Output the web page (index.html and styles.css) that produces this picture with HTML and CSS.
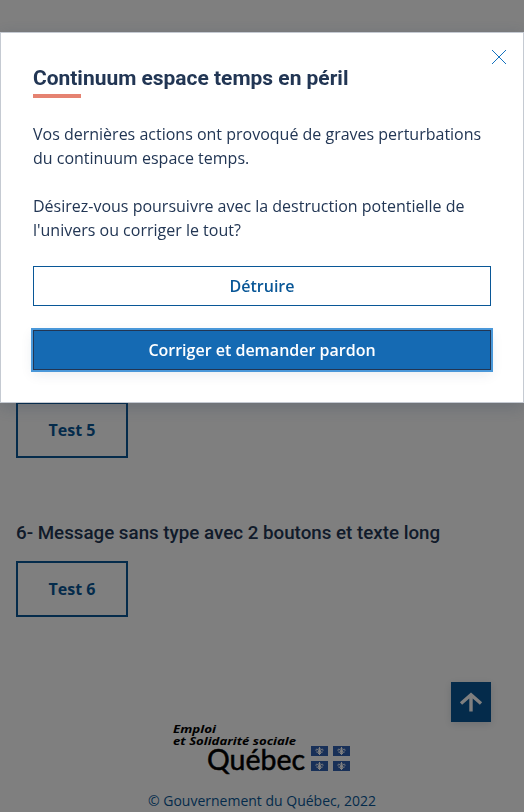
FILE: index.html
```html
<!DOCTYPE html>
<html lang="fr">
<head>
<meta charset="utf-8">
<title>Messages</title>
<link rel="stylesheet" href="styles.css">
</head>
<body>
<main class="page">
  <section class="test"><button class="test-button">Test 5</button></section>
  <section class="test">
    <h2 class="test-title">6- Message sans type avec 2 boutons et texte long</h2>
    <button class="test-button">Test 6</button>
  </section>
  <footer class="footer">
    <svg class="logo" width="180" height="56" viewBox="172 721 180 56" role="img" aria-label="Emploi et Solidarité sociale Québec">
      <defs>
        <g id="flag">
          <path fill="#3060b0" d="M0 0h17v10H0z"/>
          <path fill="none" stroke="#fff" stroke-width="1" d="M8.500 1v8M5.500 6.200h6M7.600 6C7.800 4 6.500 3 5.400 3.300 4.400 3.700 4.800 5 5.500 4.900M9.400 6C9.200 4 10.500 3 11.600 3.300 12.600 3.700 12.200 5 11.500 4.900M7 8l1.500-1.500L10 8"/>
          <path fill="#fff" d="M8.500.8l1.100 2-.6 3H8l-.6-3z"/>
        </g>
      </defs>
      <text class="ministry" x="173" y="732.500" textLength="43" lengthAdjust="spacingAndGlyphs">Emploi</text>
      <text class="ministry" x="173" y="744.500" textLength="123" lengthAdjust="spacingAndGlyphs">et Solidarité sociale</text>
      <text class="quebec" x="207" y="770" textLength="98" lengthAdjust="spacingAndGlyphs">Québec</text>
      <use href="#flag" x="311" y="746"/><use href="#flag" x="333" y="746"/>
      <use href="#flag" x="311" y="761"/><use href="#flag" x="333" y="761"/>
    </svg>
    <p class="copyright">© Gouvernement du Québec, 2022</p>
  </footer>
</main>
<button class="to-top" aria-label="Retour en haut">
  <svg width="24" height="22" viewBox="0 0 24 22"><path d="M12 20.500V3M2 12.500l10-8.700 10 8.700" fill="none" stroke="#fff" stroke-width="3.400"/></svg>
</button>
<div class="backdrop">
  <div class="modal" role="dialog" aria-modal="true" aria-labelledby="modal-title">
    <button class="close" aria-label="Fermer">
      <svg width="14" height="14" viewBox="0 0 14 14"><path d="M0 0l14 14M14 0L0 14" fill="none" stroke="#1472bf" stroke-width="1"/></svg>
    </button>
    <h1 class="modal-title" id="modal-title">Continuum espace temps en péril</h1>
    <div class="modal-body">
      <p>Vos dernières actions ont provoqué de graves perturbations du continuum espace temps.</p>
      <p>Désirez-vous poursuivre avec la destruction potentielle de l'univers ou corriger le tout?</p>
    </div>
    <div class="actions">
      <button class="action secondary">Détruire</button>
      <button class="action primary">Corriger et demander pardon</button>
    </div>
  </div>
</div>
</body>
</html>
```
FILE: styles.css
```css
* { box-sizing: border-box; }
html, body { height: 100%; }
body {
  margin: 0;
  overflow: hidden;
  background: #fff;
  color: #223654;
  font: 16px/24px "Open Sans", sans-serif;
}
button { font-family: inherit; margin: 0; }
p, h1, h2 { margin: 0; }
.page { padding: 402px 16px 0; }
.test { margin-bottom: 63px; }
.test-title {
  margin-bottom: 16px;
  font: 500 18.75px/24px Roboto, sans-serif;
}
.test-button {
  display: block;
  width: 112px;
  height: 56px;
  border: 2px solid #095797;
  background: transparent;
  color: #095797;
  font-size: 16px;
  font-weight: 700;
}
.footer {
  display: flex;
  flex-direction: column;
  align-items: center;
  margin-top: 104px;
}
.logo { display: block; }
.ministry { font: italic 700 11px "Open Sans", sans-serif; fill: #000; }
.quebec { font: 400 29px Lato, sans-serif; fill: #000; stroke: #000; stroke-width: .5px; }
.copyright {
  margin-top: 12px;
  color: #095797;
  font-size: 14px;
}
.to-top {
  position: fixed;
  right: 33px;
  bottom: 90px;
  display: flex;
  align-items: center;
  justify-content: center;
  width: 40px;
  height: 40px;
  padding: 0;
  border: 0;
  background: #095797;
  box-shadow: 0 2px 8px rgba(34, 54, 84, .16);
}
.backdrop {
  position: fixed;
  inset: 0;
  padding-top: 32px;
  background: rgba(0, 0, 0, .5);
}
.modal {
  position: relative;
  height: 371px;
  padding: 33px 32px 32px;
  border: 1px solid #c5cad2;
  background: #fff;
  box-shadow: 0 4px 16px rgba(34, 54, 84, .24);
}
.close {
  position: absolute;
  top: 17px;
  right: 17px;
  padding: 0;
  border: 0;
  background: none;
}
.close svg { display: block; }
.modal-title {
  font: 700 20.96px/25px Roboto, sans-serif;
}
.modal-title::after {
  content: "";
  display: block;
  width: 48px;
  height: 4px;
  margin-top: 3px;
  background: #e58271;
}
.modal-body { margin-top: 24px; }
.modal-body p + p { margin-top: 24px; }
.actions {
  display: grid;
  gap: 24px;
  margin-top: 24px;
}
.action {
  height: 40px;
  border: 1px solid #095797;
  background: #fff;
  color: #095797;
  font-size: 16px;
  font-weight: 600;
}
.primary {
  border-color: #223654;
  background: #156ab3;
  color: #fff;
  box-shadow: 0 0 0 2px #4a98d9, 0 4px 12px rgba(34, 54, 84, .1);
}
```
